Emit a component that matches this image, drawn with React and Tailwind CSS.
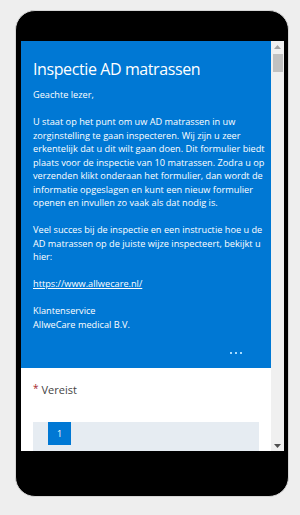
import { useState } from 'react';

// line breaks follow the form's own wrapping
const intro = [
  'U staat op het punt om uw AD matrassen in uw',
  'zorginstelling te gaan inspecteren. Wij zijn u zeer',
  'erkentelijk dat u dit wilt gaan doen. Dit formulier biedt',
  'plaats voor de inspectie van 10 matrassen. Zodra u op',
  'verzenden klikt onderaan het formulier, dan wordt de',
  'informatie opgeslagen en kunt een nieuw formulier',
  'openen en invullen zo vaak als dat nodig is.',
];

const succes = [
  'Veel succes bij de inspectie en een instructie hoe u de',
  'AD matrassen op de juiste wijze inspecteert, bekijkt u',
  'hier:',
];

function Lines({ lines, className = '' }) {
  return (
    <p className={className}>
      {lines.map((l) => (
        <span key={l} className="block whitespace-nowrap">{l}</span>
      ))}
    </p>
  );
}

function Scrollbar() {
  return (
    <div className="w-[13px] bg-[#f0f0f0] flex flex-col items-center">
      <div className="h-[11px] flex items-center justify-center">
        <svg width="7" height="4" viewBox="0 0 7 4">
          <path d="M0 4 L3.5 0 L7 4 Z" fill="#a3a3a3" />
        </svg>
      </div>
      <div className="w-[10px] h-[18px] bg-[#c1c1c1] mt-[2px]" />
      <div className="flex-1" />
      <div className="h-[11px] flex items-center justify-center">
        <svg width="7" height="4" viewBox="0 0 7 4">
          <path d="M0 0 L3.5 4 L7 0 Z" fill="#505050" />
        </svg>
      </div>
    </div>
  );
}

export default function App() {
  const [page] = useState(1);

  return (
    <div
      className="w-[300px] h-[515px] bg-[#eeeeee] pt-[10px] pl-[15px]"
      style={{ fontFamily: '"Open Sans", "Noto Sans", sans-serif' }}
    >
      <div className="w-[274px] h-[487px] bg-black rounded-[20px] pt-[30px] pl-[5px] border border-[#d6d6d6]">
        <div className="w-[263px] h-[410px] flex bg-white overflow-hidden">
          <div className="w-[250px] overflow-hidden">
            <div className="bg-[#0078d4] h-[327px] px-[12px] pt-[14px] text-white relative">
              <h1 className="text-[16px] leading-[28px] tracking-[-0.4px]">Inspectie AD matrassen</h1>
              <div className="mt-[5px] text-[9.2px] leading-[13.5px]">
                <p>Geachte lezer,</p>
                <Lines lines={intro} className="mt-[13.5px]" />
                <Lines lines={succes} className="mt-[13.5px]" />
                <p className="mt-[13.5px]">
                  <a href="#" className="underline">https://www.allwecare.nl/</a>
                </p>
                <p className="mt-[13.5px]">Klantenservice</p>
                <p>AllweCare medical B.V.</p>
              </div>
              <div className="absolute right-[29px] bottom-[14px] flex gap-[3px]">
                <span className="w-[2px] h-[2px] bg-[#a6dbff]" />
                <span className="w-[2px] h-[2px] bg-[#a6dbff]" />
                <span className="w-[2px] h-[2px] bg-[#a6dbff]" />
              </div>
            </div>
            <div className="px-[12px] pt-[14px]">
              <div className="flex items-start gap-[3px] text-[11px] text-[#444444]">
                <span className="text-[#a4262c] text-[10px] leading-[12px]">*</span>
                <span className="leading-[16px]">Vereist</span>
              </div>
              <div className="mt-[24px] bg-[#e6ecf2] h-[40px] pl-[15px]">
                <div className="w-[23px] h-[23px] bg-[#0078d4] text-white text-[9px] flex items-center justify-center">
                  {page}
                </div>
              </div>
            </div>
          </div>
          <Scrollbar />
        </div>
      </div>
    </div>
  );
}
